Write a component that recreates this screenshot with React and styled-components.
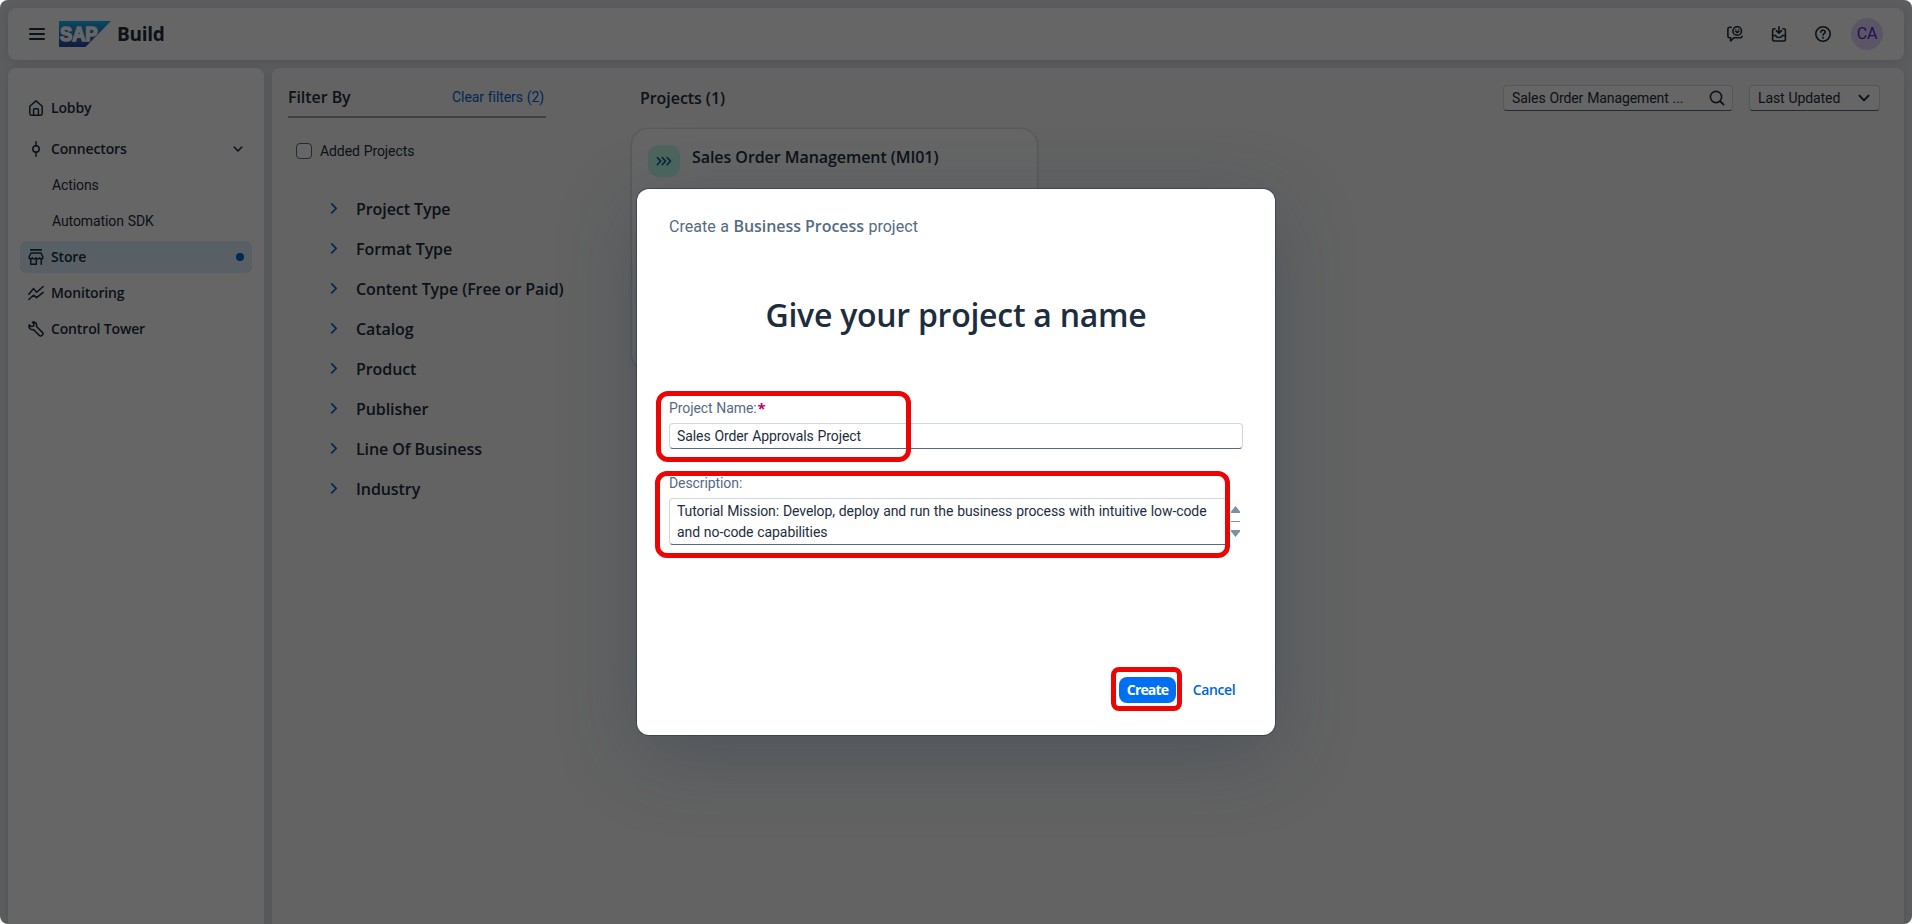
import React from 'react';
import styled, { createGlobalStyle, css } from 'styled-components';

const regular = css`
  font-family: Roboto, 'Liberation Sans', sans-serif;
  font-weight: 400;
  letter-spacing: -0.09px;
  word-spacing: 0.5px;
`;
const semibold = css`
  font-family: 'Open Sans', 'Noto Sans', sans-serif;
  font-weight: 600;
  letter-spacing: -0.06px;
  word-spacing: 0;
`;

const GlobalStyle = createGlobalStyle`
  * { box-sizing: border-box; }
  body { margin: 0; background: #fff; overflow: hidden; }
  svg { display: block; flex: none; }
`;

/* ---------- shell ---------- */

const Page = styled.div`
  position: relative;
  display: flex;
  flex-direction: column;
  gap: 8px;
  height: 924px;
  padding: 8px 8px 0;
  overflow: hidden;
  border-radius: 8px;
  background: #e6e8ec;
  color: #1d2d3e;
  ${regular}
  font-size: 14px;
`;

const ShellBar = styled.header`
  display: flex;
  align-items: center;
  height: 52px;
  flex: none;
  padding: 0 21px;
  border-radius: 8px;
  background: #fff;
  box-shadow: 0 2px 8px rgba(34, 53, 72, 0.16);
`;

const Logo = styled.svg`
  margin-left: 14px;
`;

const ProductName = styled.span`
  ${semibold}
  margin-left: 6px;
  font-size: 19px;
  font-weight: 700;
  letter-spacing: -0.25px;
  line-height: 24px;
`;

const ShellActions = styled.div`
  display: flex;
  align-items: center;
  gap: 28px;
  margin-left: auto;
`;

const Avatar = styled.span`
  width: 32px;
  height: 32px;
  margin-left: -8px;
  border-radius: 50%;
  background: #e2d8ff;
  color: #5b25d8;
  font-size: 16px;
  line-height: 32px;
  text-align: center;
`;

const Body = styled.div`
  display: flex;
  flex: 1;
  gap: 8px;
  min-height: 0;
`;

const SideNav = styled.nav`
  display: flex;
  flex-direction: column;
  gap: 4px;
  width: 256px;
  flex: none;
  padding: 24px 12px;
  border-radius: 8px 8px 0 0;
  background: #fff;
  box-shadow: 0 2px 8px rgba(34, 53, 72, 0.16);
`;

const NavItem = styled.a`
  ${semibold}
  display: flex;
  align-items: center;
  gap: 7px;
  height: 32px;
  flex: none;
  padding: 0 8px;
  margin-bottom: ${(p) => (p.$spaced ? '5px' : 0)};
  border-radius: 6px;
  background: ${(p) => (p.$active ? '#ddf0fc' : 'transparent')};
  font-size: 14px;
  letter-spacing: -0.15px;
`;

const NavLabel = styled.span`
  line-height: 18px;
`;

const NavSubItem = styled.a`
  display: flex;
  align-items: center;
  height: 32px;
  flex: none;
  padding-left: 32px;
`;

const NavEnd = styled.span`
  display: flex;
  margin: 0 ${(p) => p.$inset || 0}px 0 auto;
`;

const ActiveDot = styled.span`
  width: 8px;
  height: 8px;
  border-radius: 50%;
  background: #0064d9;
`;

const Main = styled.main`
  display: flex;
  flex: 1;
  padding: 16px 24px 0 16px;
  border-radius: 8px 8px 0 0;
  background: #f7f7f7;
  box-shadow: 0 2px 8px rgba(34, 53, 72, 0.16);
`;

/* ---------- filters ---------- */

const FilterPanel = styled.aside`
  width: 258px;
  margin-right: 86px;
  flex: none;
`;

const FilterHeader = styled.div`
  display: flex;
  align-items: center;
  justify-content: space-between;
  padding: 1px 2px 7px 0;
  border-bottom: 2px solid #a3a3a3;
  line-height: 24px;
`;

const SectionTitle = styled.h2`
  ${semibold}
  margin: 0;
  font-size: 16px;
  line-height: 24px;
`;

const ClearLink = styled.a`
  color: #0064d9;
`;

const CheckRow = styled.label`
  display: flex;
  align-items: center;
  gap: 8px;
  height: 24px;
  margin: 21px 0 25px 8px;
`;

const CheckBox = styled.span`
  width: 16px;
  height: 16px;
  border: 1px solid #556b82;
  border-radius: 4px;
  background: #fff;
`;

const FilterRow = styled.div`
  ${semibold}
  display: flex;
  align-items: center;
  gap: 18px;
  height: 40px;
  padding-left: 42px;
  font-size: 16px;
  letter-spacing: -0.08px;
  white-space: nowrap;
`;

const FilterName = styled.span`
  margin-top: 2px;
  line-height: 24px;
`;

/* ---------- projects ---------- */

const Projects = styled.section`
  flex: 1;
`;

const ProjectsBar = styled.div`
  display: flex;
  align-items: center;
  height: 28px;
  padding-left: 8px;

  ${SectionTitle} {
    margin: 0 auto 0 0;
  }
`;

const Control = styled.div`
  display: flex;
  align-items: center;
  justify-content: space-between;
  width: ${(p) => p.$width}px;
  height: 26px;
  margin-left: ${(p) => p.$gap || 0}px;
  padding: 0 ${(p) => p.$end}px 0 8px;
  border: 1px solid #d1d7de;
  border-bottom-color: #556b82;
  border-radius: 4px;
  background: #fff;
`;

const Card = styled.article`
  display: flex;
  align-items: flex-start;
  gap: 12px;
  width: 405px;
  height: 241px;
  margin-top: 17px;
  padding: 16px;
  border-radius: 16px;
  background: #fff;
  box-shadow: 0 0 2px rgba(34, 53, 72, 0.35), 0 2px 4px rgba(34, 53, 72, 0.12);

  ${SectionTitle} {
    line-height: 25px;
  }
`;

const CardIcon = styled.span`
  display: flex;
  align-items: center;
  justify-content: center;
  width: 32px;
  height: 32px;
  border-radius: 10px;
  background: #c2fcee;
  color: #046c7a;
`;

/* ---------- dialog ---------- */

const Overlay = styled.div`
  position: absolute;
  inset: 0;
  display: flex;
  align-items: center;
  justify-content: center;
  background: rgba(0, 0, 0, 0.6);
`;

const Dialog = styled.div`
  width: 638px;
  height: 546px;
  display: flex;
  flex-direction: column;
  padding: 27px 32px 32px;
  border-radius: 12px;
  background: #fff;
  box-shadow: 0 0 0 1px rgba(34, 53, 72, 0.55), 0 20px 80px rgba(34, 53, 72, 0.32);
`;

const Subtitle = styled.p`
  margin: 0;
  color: #556b82;
  font-size: 16px;
  line-height: 20px;
  letter-spacing: 0.03px;
`;

const Strong = styled.b`
  ${semibold}
  font-size: 16px;
`;

const Heading = styled.h1`
  ${semibold}
  margin: 58px 0 63px;
  font-size: 32px;
  letter-spacing: -0.26px;
  line-height: 40px;
  text-align: center;
`;

const Field = styled.div`
  position: relative;
  margin-bottom: ${(p) => p.$below || 0}px;
`;

const Label = styled.div`
  display: flex;
  color: #556b82;
  line-height: 20px;
`;

const Required = styled.span`
  ${semibold}
  margin-left: 1px;
  color: #ba066c;
  font-size: 15px;
  font-weight: 700;
`;

const boxed = css`
  margin-top: 5px;
  padding: 0 7px;
  border: 1px solid #d1d7de;
  border-bottom-color: #556b82;
  border-radius: 4px;
`;

const TextInput = styled.div`
  ${boxed}
  height: 26px;
  line-height: 25px;
`;

const AreaRow = styled.div`
  display: flex;
`;

const TextArea = styled.div`
  ${boxed}
  width: 560px;
  height: 47px;
  padding-top: 2px;
  line-height: 21px;
  border-right: 0;
`;

const Scroller = styled.svg`
  margin: 13px 0 0 2px;
`;

const Footer = styled.div`
  display: flex;
  gap: 9px;
  justify-content: flex-end;
  margin-top: auto;
`;

const Button = styled.div`
  ${semibold}
  position: relative;
  width: ${(p) => (p.$primary ? 57 : 58)}px;
  height: 26px;
  border-radius: 8px;
  background: ${(p) => (p.$primary ? '#0070f2' : 'transparent')};
  color: ${(p) => (p.$primary ? '#fff' : '#0064d9')};
  font-size: 14px;
  font-weight: ${(p) => (p.$primary ? 700 : 600)};
  letter-spacing: ${(p) => (p.$primary ? '-0.85px' : '-0.4px')};
  line-height: 26px;
  text-align: center;
`;

const Highlight = styled.span`
  position: absolute;
  top: ${(p) => p.$top}px;
  left: ${(p) => p.$left}px;
  width: ${(p) => p.$width}px;
  height: ${(p) => p.$height}px;
  border: 5px solid #eb0505;
  border-radius: ${(p) => p.$radius || 12}px;
`;

/* ---------- icons ---------- */

const Icon = ({ size = 16, stroke = 1.5, children }) => (
  <svg width={size} height={size} viewBox={`0 0 ${size} ${size}`} fill="none" stroke="currentColor"
    strokeWidth={stroke} strokeLinecap="round" strokeLinejoin="round">
    {children}
  </svg>
);

const MenuIcon = () => (
  <Icon stroke={2}><path d="M1 3h14M1 8h14M1 13h14" /></Icon>
);
const HomeIcon = () => (
  <Icon>
    <path d="M1.8 6.2 8 .9l6.2 5.3v7.4a1.6 1.6 0 0 1-1.6 1.6H3.4a1.6 1.6 0 0 1-1.6-1.6z" />
    <path d="M5.6 15V9.8a1 1 0 0 1 1-1h2.8a1 1 0 0 1 1 1V15" />
  </Icon>
);
const ConnectorIcon = () => (
  <Icon><circle cx="8" cy="8" r="3.2" /><path d="M8 .8v4M8 11.2v4" /></Icon>
);
const StoreIcon = () => (
  <Icon stroke={1.5}>
    <path d="M2.8.9h10.4" strokeWidth="1.8" />
    <path d="M3 4h10l2 4.300c0 2-2.600 2.200-3.300.500-.7 1.700-3.200 1.700-3.700 0-.5 1.700-3 1.700-3.700 0C3.600 10.500 1 10.300 1 8.300z" />
    <path d="M2.700 10v5.200h5.600V10M13.300 10v5.200" />
  </Icon>
);
const MonitorIcon = () => (
  <Icon stroke={1.5}><path d="M.8 9.300 5.600 3.600l3 3.700L15.200 1.500M.8 14.500l4.800-4.300 3 2.500 6.600-5.300" /></Icon>
);
const WrenchIcon = () => (
  <Icon stroke={1.5}>
    <path d="M4.300 1.100 6 2.800 5.600 5 3.300 5.600 1.300 3.900C.2 6.500 2.400 9.300 5.400 8.500l6.100 6.100a1.500 1.500 0 0 0 2.200 0l.9-.9a1.500 1.500 0 0 0 0-2.100L8.500 5.500C9.300 2.600 6.900.2 4.300 1.100z" />
  </Icon>
);
const ChevronDown = ({ size = 10, stroke = 1.6 }) => (
  <svg width={size} height={size} viewBox="0 0 10 10" fill="none" stroke="currentColor" strokeWidth={stroke}
    strokeLinecap="round" strokeLinejoin="round"><path d="M1.200 3 5 7l3.800-4" /></svg>
);
const ChevronRight = () => (
  <svg width="8" height="12" viewBox="0 0 8 12" fill="none" stroke="#0064d9" strokeWidth="1.7"
    strokeLinecap="round" strokeLinejoin="round"><path d="M1.700 1.900 6.200 6.400l-4.500 4.500" /></svg>
);
const FeedbackIcon = () => (
  <Icon stroke={1.6}>
    <path d="M4.200 1.300H2.600A1.700 1.700 0 0 0 .9 3v7a1.700 1.700 0 0 0 1.700 1.700h1v3.200l3.300-3.200h6.500a1.700 1.700 0 0 0 1.700-1.400" />
    <circle cx="10.200" cy="5" r="4.300" />
    <path d="M8.300 5.600c.7 1.800 3.100 1.800 3.800 0z" fill="currentColor" strokeWidth="1" />
    <path d="M8.700 3.700h.01M11.700 3.700h.01" strokeWidth="1.300" />
  </Icon>
);
const InboxIcon = () => (
  <Icon stroke={1.6}>
    <path d="M4 2.800H3.200a1.600 1.600 0 0 0-1.600 1.600v9a1.600 1.600 0 0 0 1.600 1.600h9.600a1.600 1.600 0 0 0 1.600-1.600v-9a1.600 1.600 0 0 0-1.600-1.600H12M8 .8v6M5.400 4.600 8 7.200l2.600-2.600M1.600 9.500h3.200c.4 2.700 6 2.700 6.400 0h3.200" />
  </Icon>
);
const HelpIcon = () => (
  <Icon stroke={1.6}>
    <circle cx="8" cy="8" r="7.200" />
    <path d="M5.900 6.200c0-2.800 4.300-2.600 4.300 0 0 1.500-2.100 1.400-2.200 3" />
    <path d="M8 11.700h.01" strokeWidth="1.900" />
  </Icon>
);
const SearchIcon = () => (
  <Icon stroke={1.6}><circle cx="7" cy="7" r="5.600" /><path d="m11 11 3.600 3.600" strokeWidth="1.800" /></Icon>
);
const TripleChevron = () => (
  <Icon stroke={1.6}><path d="m1.300 4.500 3.400 3.600-3.400 3.600M6.200 4.500l3.400 3.600-3.400 3.600M11.100 4.500l3.400 3.600-3.400 3.600" /></Icon>
);

const SapLogo = () => (
  <Logo width="52" height="26" viewBox="0 0 52 26">
    <defs>
      <linearGradient id="sap" x1="0" y1="0" x2="0" y2="1">
        <stop offset="0" stopColor="#1fb2ec" />
        <stop offset="0.5" stopColor="#1f7cc9" />
        <stop offset="1" stopColor="#2a46a2" />
      </linearGradient>
    </defs>
    <path d="M0 0h52L26.500 26H0z" fill="url(#sap)" />
    <text x="1" y="20.300" fill="#fff" stroke="#fff" strokeWidth="1.500" fontFamily="'Liberation Sans', sans-serif"
      fontWeight="700" fontSize="20.500" textLength="37.500" lengthAdjust="spacingAndGlyphs">SAP</text>
  </Logo>
);

const filters = ['Project Type', 'Format Type', 'Content Type (Free or Paid)', 'Catalog', 'Product', 'Publisher',
  'Line Of Business', 'Industry'];

export default function App() {
  return (
    <Page>
      <GlobalStyle />
      <ShellBar>
        <MenuIcon />
        <SapLogo />
        <ProductName>Build</ProductName>
        <ShellActions>
          <FeedbackIcon />
          <InboxIcon />
          <HelpIcon />
          <Avatar>CA</Avatar>
        </ShellActions>
      </ShellBar>

      <Body>
        <SideNav>
          <NavItem $spaced><HomeIcon /><NavLabel>Lobby</NavLabel></NavItem>
          <NavItem>
            <ConnectorIcon /><NavLabel>Connectors</NavLabel>
            <NavEnd $inset={1}><ChevronDown /></NavEnd>
          </NavItem>
          <NavSubItem>Actions</NavSubItem>
          <NavSubItem>Automation SDK</NavSubItem>
          <NavItem $active><StoreIcon /><NavLabel>Store</NavLabel><NavEnd><ActiveDot /></NavEnd></NavItem>
          <NavItem><MonitorIcon /><NavLabel>Monitoring</NavLabel></NavItem>
          <NavItem><WrenchIcon /><NavLabel>Control Tower</NavLabel></NavItem>
        </SideNav>

        <Main>
          <FilterPanel>
            <FilterHeader>
              <SectionTitle>Filter By</SectionTitle>
              <ClearLink>Clear filters (2)</ClearLink>
            </FilterHeader>
            <CheckRow><CheckBox />Added Projects</CheckRow>
            {filters.map((name) => (
              <FilterRow key={name}><ChevronRight /><FilterName>{name}</FilterName></FilterRow>
            ))}
          </FilterPanel>

          <Projects>
            <ProjectsBar>
              <SectionTitle>Projects (1)</SectionTitle>
              <Control $width={230} $end={7}>Sales Order Management ...<SearchIcon /></Control>
              <Control $width={131} $end={9} $gap={16}>Last Updated<ChevronDown size={12} /></Control>
            </ProjectsBar>
            <Card>
              <CardIcon><TripleChevron /></CardIcon>
              <SectionTitle>Sales Order Management (MI01)</SectionTitle>
            </Card>
          </Projects>
        </Main>
      </Body>

      <Overlay>
        <Dialog>
          <Subtitle>Create a <Strong>Business Process</Strong> project</Subtitle>
          <Heading>Give your project a name</Heading>
          <Field $below={24}>
            <Label>Project Name:<Required>*</Required></Label>
            <TextInput>Sales Order Approvals Project</TextInput>
            <Highlight $top={-7} $left={-13} $width={255} $height={71} />
          </Field>
          <Field>
            <Label>Description:</Label>
            <AreaRow>
              <TextArea>
                Tutorial Mission: Develop, deploy and run the business process with intuitive low-code and no-code
                capabilities
              </TextArea>
              <Scroller width="9" height="31" viewBox="0 0 9 31">
                <path d="M4.500 0 9 5.500V7H0V5.500zM4.500 31 9 25.500V24H0v1.500z" fill="#7b91a8" />
                <path d="M0 15h9v1H0z" fill="#7b91a8" />
              </Scroller>
            </AreaRow>
            <Highlight $top={-2} $left={-14} $width={575} $height={87} />
          </Field>
          <Footer>
            <Button $primary>
              Create
              <Highlight $top={-10} $left={-8} $width={71} $height={44} $radius={8} />
            </Button>
            <Button>Cancel</Button>
          </Footer>
        </Dialog>
      </Overlay>
    </Page>
  );
}
